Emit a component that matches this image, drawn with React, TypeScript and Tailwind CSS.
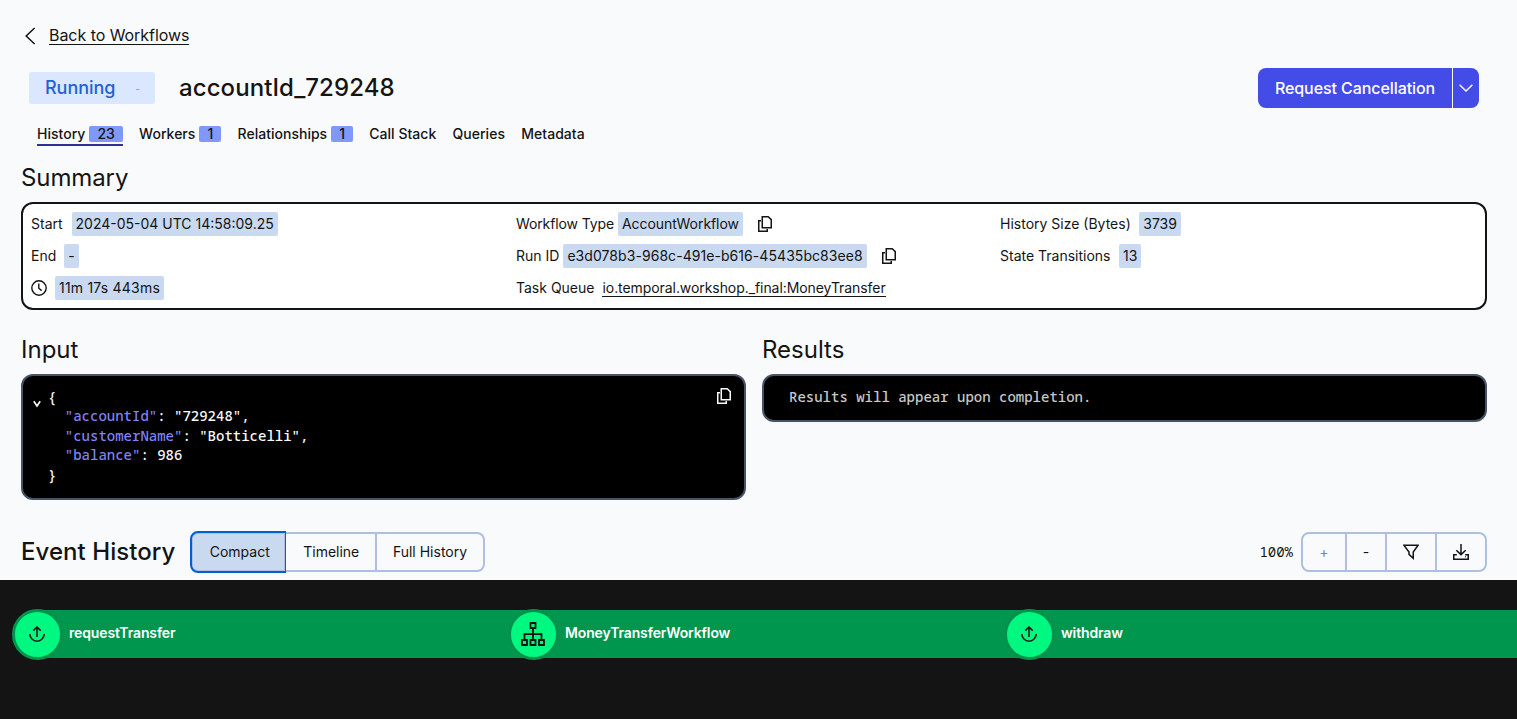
import type { ReactNode } from "react";

const sans = "font-['Inter','Liberation_Sans',sans-serif]";
const mono = "font-['Noto_Sans_Mono','DejaVu_Sans_Mono',monospace]";

function CopyIcon() {
  return (
    <svg className="h-4 w-4 shrink-0" viewBox="0 0 16 16" fill="none" stroke="currentColor" strokeWidth="1.5">
      <path d="M5.25 0.75H11.2L14.25 3.6V11.75H5.25Z" />
      <path d="M4 4.75H1.75V15.25H10.25V13" />
    </svg>
  );
}

function ClockIcon() {
  return (
    <svg className="h-4 w-4 shrink-0" viewBox="0 0 16 16" fill="none" stroke="currentColor" strokeWidth="1.4">
      <circle cx="8" cy="8" r="7.2" />
      <path d="M7.8 3.6V8.2L10.6 10.6" />
    </svg>
  );
}

function UploadIcon() {
  return (
    <svg className="h-4 w-4" viewBox="0 0 16 16" fill="none" stroke="currentColor" strokeWidth="1.5">
      <path d="M8 11V1.2M4.3 4.6L8 1L11.7 4.6" />
      <path d="M0.8 8A7.2 7.2 0 0 0 15.2 8" />
    </svg>
  );
}

function TreeIcon() {
  return (
    <svg className="h-6 w-6" viewBox="0 0 24 24" fill="none" stroke="currentColor" strokeWidth="1.8">
      <path d="M9.5 1H14.5V6H9.5ZM1 18H6V23H1ZM9.5 18H14.5V23H9.5ZM18 18H23V23H18Z" />
      <path d="M12 6V18M3.5 18V12.2H20.5V18" />
    </svg>
  );
}

function FilterIcon() {
  return (
    <svg className="h-4 w-4" viewBox="0 0 16 16" fill="none" stroke="currentColor" strokeWidth="1.5">
      <path d="M0.9 1.25H15.1L10.25 8V14.2L6 10.3V8Z" />
    </svg>
  );
}

function DownloadIcon() {
  return (
    <svg className="h-4 w-4" viewBox="0 0 16 16" fill="none" stroke="currentColor" strokeWidth="1.5">
      <path d="M8 0V10.4M3.3 6.2L8 10.6L12.7 6.2" />
      <path d="M3.8 10.75H0.75V15.25H15.25V10.75H12.2" />
      <path d="M12 12.8H13" strokeWidth="1" />
    </svg>
  );
}

function Tab({ label, count, active }: { label: string; count?: string; active?: boolean }) {
  return (
    <div
      className={
        active
          ? "flex h-5 items-start gap-1 border-b-2 border-[#312e9a]"
          : "flex h-5 items-start gap-1"
      }
    >
      <span className="text-sm leading-4 font-medium tracking-[0.02px]">{label}</span>
      {count && (
        <span className="rounded-xs bg-[#8098f9] px-2 text-sm leading-4 font-medium">{count}</span>
      )}
    </div>
  );
}

function Value({ children }: { children: ReactNode }) {
  return <span className="rounded-xs bg-[#c8d9f0] px-1 leading-6">{children}</span>;
}

function Row({ children }: { children: ReactNode }) {
  return <div className="flex h-6 items-center whitespace-nowrap">{children}</div>;
}

function CodeLine({ name, children }: { name?: string; children: ReactNode }) {
  return (
    <div className={name ? "h-[19.6px] pl-[16.8px] whitespace-pre" : "h-[19.6px] whitespace-pre"}>
      {name && <span className="text-[#8082f5]">{`"${name}"`}</span>}
      {children}
    </div>
  );
}

function EventNode({ label, icon }: { label: string; icon: ReactNode }) {
  return (
    <div className="flex w-[496px] shrink-0 items-center">
      <div className="-my-1 -ml-[25.5px] flex h-[51px] w-[51px] shrink-0 items-center justify-center rounded-full border-[3px] border-[#03924d] bg-[#00f880] text-[#141414]">
        {icon}
      </div>
      <span className="-mt-0.5 ml-[6.5px] text-sm font-semibold tracking-[-0.13px] text-white">{label}</span>
    </div>
  );
}

export default function App() {
  return (
    <div className={`h-[719px] w-full overflow-hidden bg-[#f9fafc] text-[#141414] ${sans}`}>
      <div className="flex h-[580px] flex-col pt-6 pr-[30px] pl-[21px]">
        <div className="flex h-6 items-center pl-1">
          <svg className="h-[18px] w-[11px]" viewBox="0 0 11 18" fill="none" stroke="currentColor" strokeWidth="1.5">
            <path d="M9.6 1L1.2 9L9.6 17" />
          </svg>
          <a className="-mt-0.5 ml-[13px] border-b border-[#141414] text-base leading-[18px] tracking-[-0.05px]">Back to Workflows</a>
        </div>

        <div className="mt-5 flex h-10 items-center justify-between pr-2 pl-2">
          <div className="flex items-center">
            <div className="flex h-8 w-[126px] items-center rounded-xs bg-[#dbe7fe] px-4 text-lg font-medium tracking-[-0.05px] text-[#1d63d8]">
              Running
              <span className="mt-1 ml-5 text-[10px] text-[#7aa3ea]">-</span>
            </div>
            <h1 className="ml-6 text-2xl font-medium tracking-[0.08px]">accountId_729248</h1>
          </div>
          <div className="flex h-10 gap-px text-white">
            <button className="w-[194px] rounded-l-lg bg-[#444ce7] text-base font-medium tracking-[-0.08px]">Request Cancellation</button>
            <button className="flex w-[26px] items-center justify-center rounded-r-lg bg-[#444ce7]">
              <svg className="h-2 w-3.5" viewBox="0 0 14 8" fill="none" stroke="currentColor" strokeWidth="1.4">
                <path d="M0.6 0.7L7 7L13.4 0.7" />
              </svg>
            </button>
          </div>
        </div>

        <div className="mt-[18px] flex gap-[16.3px] pl-4">
          <Tab label="History" count="23" active />
          <Tab label="Workers" count="1" />
          <Tab label="Relationships" count="1" />
          <Tab label="Call Stack" />
          <Tab label="Queries" />
          <Tab label="Metadata" />
        </div>

        <h2 className="mt-3.5 text-2xl leading-9 tracking-[-0.1px]">Summary</h2>

        <div className="mt-[6px] grid h-[108px] shrink-0 grid-cols-3 rounded-xl border-2 border-[#141414] bg-white px-2 py-2 text-sm">
          <div className="flex flex-col gap-2">
            <Row><span className="mr-[9px]">Start</span><Value>2024-05-04 UTC 14:58:09.25</Value></Row>
            <Row><span className="mr-2">End</span><Value>-</Value></Row>
            <Row><span className="mr-2"><ClockIcon /></span><Value><span className="tracking-[0.2px]">11m 17s 443ms</span></Value></Row>
          </div>
          <div className="flex flex-col gap-2 pl-[3px]">
            <Row><span className="mr-1 tracking-[-0.12px]">Workflow Type</span><Value><span className="tracking-[-0.06px]">AccountWorkflow</span></Value><span className="ml-3.5"><CopyIcon /></span></Row>
            <Row><span className="mr-1">Run ID</span><Value><span className="tracking-[0.06px]">e3d078b3-968c-491e-b616-45435bc83ee8</span></Value><span className="ml-3.5"><CopyIcon /></span></Row>
            <Row><span className="mr-2">Task Queue</span><a className="border-b border-[#141414] leading-4 tracking-[-0.07px]">io.temporal.workshop._final:MoneyTransfer</a></Row>
          </div>
          <div className="flex flex-col gap-2 pl-[5px]">
            <Row><span className="mr-[8.5px]">History Size (Bytes)</span><Value>3739</Value></Row>
            <Row><span className="mr-[8.5px]">State Transitions</span><Value>13</Value></Row>
          </div>
        </div>

        <div className="mt-[22px] grid grid-cols-[725px_725px] gap-4">
          <div>
            <h2 className="text-2xl leading-9">Input</h2>
            <div className={`mt-[6px] flex h-[126px] rounded-xl border-2 border-[#475467] bg-black pt-3 pr-3 pl-2.5 text-sm leading-[19.6px] text-[#f8fafc] ${mono}`}>
              <svg className="mt-3 h-2 w-2" viewBox="0 0 8 8" fill="none" stroke="currentColor" strokeWidth="1.6">
                <path d="M0.8 1.2L4 6L7.2 1.2" />
              </svg>
              <div className="-mt-[1.5px] ml-[7px] flex-1 font-medium">
                <CodeLine>{"{"}</CodeLine>
                <CodeLine name="accountId">{': "729248",'}</CodeLine>
                <CodeLine name="customerName">{': "Botticelli",'}</CodeLine>
                <CodeLine name="balance">{": 986"}</CodeLine>
                <CodeLine>{"}"}</CodeLine>
              </div>
              <CopyIcon />
            </div>
          </div>
          <div>
            <h2 className="text-2xl leading-9">Results</h2>
            <div className={`mt-[6px] flex h-12 rounded-xl border-2 border-[#475467] bg-black pt-[11px] pl-[25px] text-sm leading-5 font-medium text-[#c8c8c8] ${mono}`}>
              Results will appear upon completion.
            </div>
          </div>
        </div>

        <div className="mt-[31px] flex h-[42px] shrink-0 items-center">
          <h2 className="w-[169px] text-2xl font-medium tracking-[0.05px] whitespace-nowrap">Event History</h2>
          <div className="flex h-[42px] items-center text-sm">
            <button className="h-[42px] w-[95.5px] rounded-l-lg border-2 border-r-[1.5px] border-[#0060d1] bg-[#c8d9f0] pl-[3px] shadow-[inset_0_0_0_1px_#afbfdf]">Compact</button>
            <button className="h-10 w-[91.5px] border-y-2 border-r-2 border-[#afbfdf] pl-0.5">Timeline</button>
            <button className="h-10 w-[108px] rounded-r-lg border-y-2 border-r-2 border-[#afbfdf]">Full History</button>
          </div>
          <span className={`ml-auto text-sm ${mono}`}>100%</span>
          <div className="ml-2 flex h-10 divide-x-2 divide-[#afbfdf] rounded-lg border-2 border-[#afbfdf] text-sm">
            <button className="w-[44px] text-[#7087b5]">+</button>
            <button className="w-10">-</button>
            <button className="flex w-[50px] items-center justify-center"><FilterIcon /></button>
            <button className="flex w-12 items-center justify-center"><DownloadIcon /></button>
          </div>
        </div>
      </div>

      <div className="h-[139px] overflow-hidden bg-[#141414] pt-[30px] pl-[37px]">
        <div className="flex h-12 bg-[#00964e]">
          <EventNode label="requestTransfer" icon={<UploadIcon />} />
          <EventNode label="MoneyTransferWorkflow" icon={<TreeIcon />} />
          <EventNode label="withdraw" icon={<UploadIcon />} />
        </div>
      </div>
    </div>
  );
}
